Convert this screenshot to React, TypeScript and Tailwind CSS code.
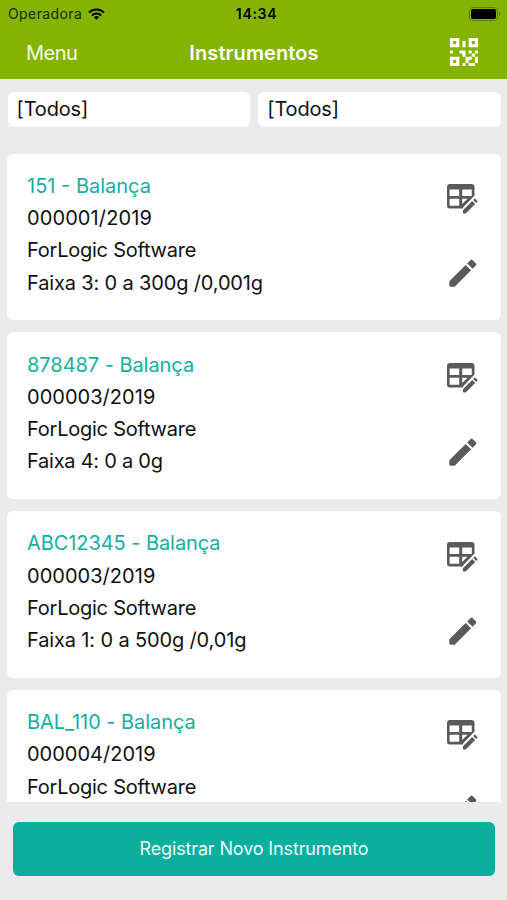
const FONT = "font-['Inter','Liberation_Sans',sans-serif]";

type Instrument = {
    title: string;
    code: string;
    company: string;
    range?: string;
    titleTracking: string;
    codeTracking: string;
    rangeTracking?: string;
};

const instruments: Instrument[] = [
    { title: "151 - Balança", code: "000001/2019", company: "ForLogic Software", range: "Faixa 3: 0 a 300g /0,001g", titleTracking: "tracking-[0px]", codeTracking: "tracking-[0.1px]", rangeTracking: "tracking-[-0.15px]" },
    { title: "878487 - Balança", code: "000003/2019", company: "ForLogic Software", range: "Faixa 4: 0 a 0g", titleTracking: "tracking-[-0.05px]", codeTracking: "tracking-[0.03px]", rangeTracking: "tracking-[-0.25px]" },
    { title: "ABC12345 - Balança", code: "000003/2019", company: "ForLogic Software", range: "Faixa 1: 0 a 500g /0,01g", titleTracking: "tracking-[-0.07px]", codeTracking: "tracking-[0.03px]", rangeTracking: "tracking-[-0.14px]" },
    { title: "BAL_110 - Balança", code: "000004/2019", company: "ForLogic Software", titleTracking: "tracking-[-0.05px]", codeTracking: "tracking-[0px]" },
];

const WifiIcon = () => (
    <svg className="h-3 w-[17px]" viewBox="0 0 17 12" fill="none" stroke="black" strokeWidth={2.1}>
        <path d="M1 4.6a10.6 10.6 0 0115 0M3.8 7.4a6.7 6.7 0 019.4 0" />
        <path d="M8.5 11.8L5.9 9.2a3.7 3.7 0 015.2 0z" fill="black" stroke="none" />
    </svg>
);

const BatteryIcon = () => (
    <svg className="h-[14px] w-8" viewBox="0 0 32 14">
        <rect x="0.5" y="0.5" width="28" height="13" rx="3.5" fill="none" stroke="#588000" />
        <rect x="2" y="2" width="25" height="10" rx="2" fill="black" />
        <path d="M30 5v4c1-.3 1.5-1.1 1.5-2S31 5.300 30 5z" fill="#588000" />
    </svg>
);

const QrIcon = () => (
    <svg className="size-7" viewBox="0 0 27 27" fill="white">
        <path fillRule="evenodd" d="M0 0h9v9H0zM3 3v3h3V3zM18 0h9v9h-9zM21 3v3h3V3zM0 18h9v9H0zM3 21v3h3v-3z" />
        <path d="M12 3h3v6h-3zM0 12h3v3H0zM9 12h6v6h-3v-3H9zM18 12h3v3h-3zM24 12h3v3h-3zM21 15h3v3h-3zM15 18h6v3h-3v3h-3v3h-3v-3h3zM24 18h3v6h-3zM18 24h6v3h-6z" />
    </svg>
);

const TableEditIcon = () => (
    <svg className="h-[30px] w-8" viewBox="0 0 32 30" fill="#5a5a5a">
        <path fillRule="evenodd" d="M3 0h21.500a3 3 0 013 3v8.500L16 23.500V24.500H3a3 3 0 01-3-3V3a3 3 0 013-3zM2.600 5.500v6.500h9.600V5.500zM15.200 5.500v6.500H24.800V5.500zM2.600 14.800v7h9.600v-7zM15.200 14.800V20l5.300-5.200z" />
        <path d="M16.200 26l9-9 3 3-9 9q-.5.500-1.200.5h-1.300q-.8 0-.8-.8v-1.300q0-.8.3-1.400zM26.200 16l1.200-1.200q.5-.5 1 0l1.900 1.900q.5.500 0 1l-1.200 1.200z" />
    </svg>
);

const PencilIcon = () => (
    <svg className="size-7" viewBox="0 0 28 28" fill="#5a5a5a">
        <path d="M.8 21.800L16.700 5.900l5.400 5.400L6.200 27.200q-.5.500-1.200.5H1.700Q.3 27.700.3 26.300V23q0-.7.5-1.200zM18.200 4.400l3.200-3.200q1.200-1.200 2.400 0l3 3q1.200 1.200 0 2.400l-3.200 3.200z" />
    </svg>
);

function FilterField() {
    return (
        <div className="flex h-[35px] flex-1 items-center rounded-md bg-white px-[9px] pb-px text-xl tracking-[-0.15px] text-[#111]">
            <span>[Todos]</span>
        </div>
    );
}

function InstrumentCard({ item }: { item: Instrument }) {
    return (
        <article className="flex h-[166.500px] shrink-0 justify-between rounded-md bg-white pr-[22.500px] pl-5">
            <div className="flex flex-col pt-[16.400px] text-xl leading-[32.200px] text-[#111]">
                <h2 className={`text-[#18ae9f] ${item.titleTracking}`}>{item.title}</h2>
                <p className={item.codeTracking}>{item.code}</p>
                <p className="tracking-[-0.24px]">{item.company}</p>
                {item.range && <p className={item.rangeTracking}>{item.range}</p>}
            </div>
            <div className="flex flex-col items-center gap-[45px] pt-[30.500px]">
                <TableEditIcon />
                <PencilIcon />
            </div>
        </article>
    );
}

export default function App() {
    return (
        <div className={`flex h-[900px] w-[507px] flex-col overflow-hidden bg-[#ebebeb] ${FONT}`}>
            <header className="h-[79px] shrink-0 bg-[#84b400]">
                <div className="grid h-7 grid-cols-3 items-center pr-1.5 pl-2 text-sm text-black">
                    <div className="flex items-center gap-1.5">
                        <span className="tracking-[0.4px] text-[#1c2a00]">Operadora</span>
                        <WifiIcon />
                    </div>
                    <span className="pl-1 text-center font-semibold tracking-[0.7px]">14:34</span>
                    <div className="flex justify-end pb-px"><BatteryIcon /></div>
                </div>
                <div className="grid h-12 grid-cols-3 items-center pr-[29px] pl-[26px] text-xl text-white">
                    <span className="pt-px tracking-[-0.5px] text-[#f4fbe0]">Menu</span>
                    <h1 className="pt-px pl-1 text-center font-semibold tracking-[0.1px]">Instrumentos</h1>
                    <div className="flex justify-end"><QrIcon /></div>
                </div>
            </header>

            <div className="flex shrink-0 gap-2 pt-[13px] pr-1.5 pb-[26.500px] pl-[7.500px]">
                <FilterField />
                <FilterField />
            </div>

            <main className="flex h-[648.500px] flex-col gap-[12.300px] overflow-hidden pr-1.5 pl-[7px]">
                {instruments.map((item) => (
                    <InstrumentCard key={item.title} item={item} />
                ))}
            </main>

            <footer className="shrink-0 pt-5 pr-3 pl-[13px]">
                <button className="h-[54px] w-full rounded-md bg-[#09ae9f] text-lg tracking-[-0.14px] text-[#e6fffb]">Registrar Novo Instrumento</button>
            </footer>
        </div>
    );
}
